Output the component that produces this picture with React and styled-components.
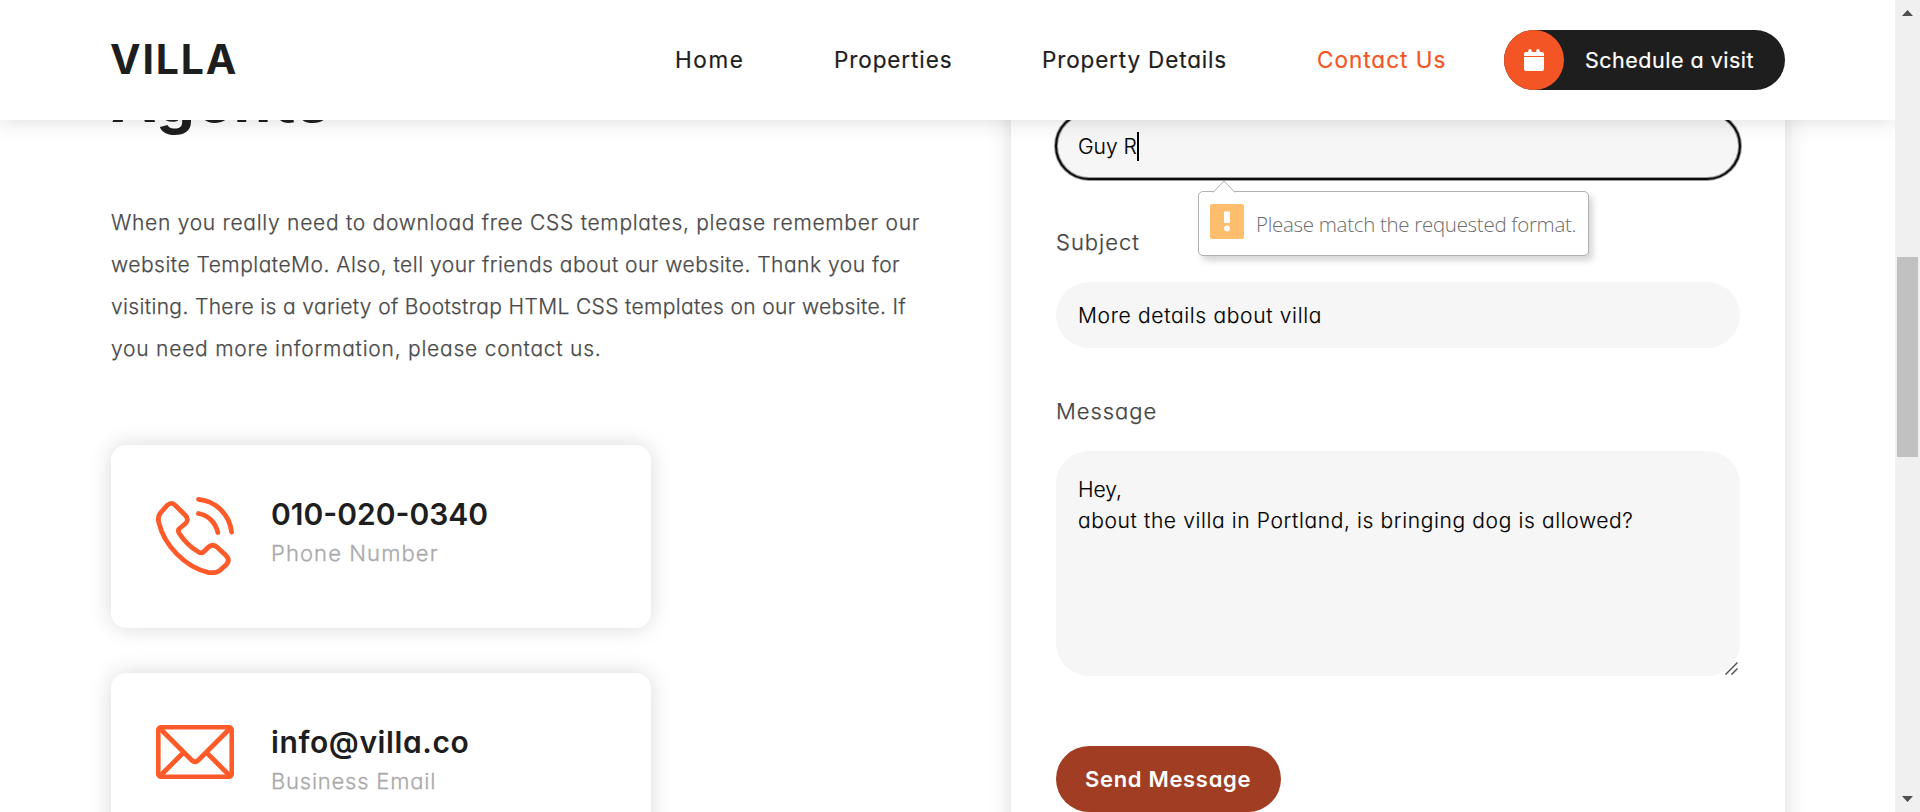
import React from "react";
import styled, { createGlobalStyle } from "styled-components";

const Global = createGlobalStyle`
  *, *::before, *::after { box-sizing: border-box; }
  html, body { margin: 0; padding: 0; overflow: hidden; background: #fff; }
  body { font-family: Inter, "Liberation Sans", sans-serif; font-feature-settings: "cv11"; color: #1e1e1e; }
  h2, h6, p { margin: 0; padding: 0; }
`;
const shadow = "0 0 22px rgba(0, 0, 0, 0.15)";

const Viewport = styled.div`
  display: flex;
  width: 1920px;
  height: 812px;
  overflow: hidden;
`;
const Page = styled.div`
  position: relative;
  width: 1895px;
  height: 812px;
  overflow: hidden;
`;
const Text = styled.span`
  white-space: pre;
  letter-spacing: ${(p) => p.$ls || 0}px;
`;

const Header = styled.header`
  position: absolute;
  inset: 0 0 auto 0;
  z-index: 5;
  height: 120px;
  padding: 0 110px;
  display: flex;
  align-items: center;
  justify-content: space-between;
  background: #fff;
  box-shadow: ${shadow};
`;
const Logo = styled.div`
  font-size: 41px;
  font-weight: 700;
  line-height: 50px;
  padding-bottom: 2px;
`;
const Nav = styled.nav`
  display: flex;
  align-items: center;
  gap: 91px;
`;
const NavLink = styled.a`
  width: ${(p) => p.$w}px;
  font-size: 22.5px;
  font-weight: 400;
  line-height: 30px;
  -webkit-text-stroke: 0.2px currentColor;
  color: ${(p) => (p.$active ? "#f35525" : "#1e1e1e")};
`;
const VisitButton = styled.a`
  display: flex;
  align-items: center;
  gap: 21px;
  width: 281px;
  height: 60px;
  margin-left: -32px;
  border-radius: 30px;
  background: #1e1e1e;
  color: #fff;
  font-size: 21.5px;
  font-weight: 400;
  line-height: 28px;
  -webkit-text-stroke: 0.2px currentColor;
`;
const VisitIcon = styled.span`
  width: 60px;
  height: 60px;
  display: flex;
  align-items: center;
  justify-content: center;
  border-radius: 50%;
  background: #f35525;
`;

const Main = styled.main`
  display: flex;
  justify-content: space-between;
  align-items: flex-start;
  height: 900px;
  padding: 0 110px 0 111px;
`;
const Intro = styled.section`
  width: 820px;
  padding-top: 64px;
`;
const Title = styled.h2`
  font-size: 61px;
  font-weight: 700;
  line-height: 72px;
`;
const Paragraph = styled.p`
  display: flex;
  flex-direction: column;
  margin-top: 66px;
  font-size: 21px;
  font-weight: 300;
  line-height: 42px;
  -webkit-text-stroke: 0.25px currentColor;
  color: #4a4a4a;
`;
const Cards = styled.div`
  display: flex;
  flex-direction: column;
  gap: 45px;
  width: 540px;
  margin-top: 75px;
`;
const InfoCard = styled.article`
  display: flex;
  align-items: flex-start;
  gap: 37px;
  height: 183px;
  padding: 50px 45px;
  border-radius: 15px;
  background: #fff;
  box-shadow: ${shadow};
  svg { margin-top: 2px; flex: none; }
`;
const InfoTitle = styled.h6`
  font-size: 30px;
  font-weight: 600;
  line-height: 38px;
`;
const InfoSub = styled.div`
  margin-top: 3px;
  font-size: 22px;
  font-weight: 300;
  line-height: 34px;
  -webkit-text-stroke: 0.3px currentColor;
  color: #aaa;
`;

const FormCard = styled.form`
  display: flex;
  flex-direction: column;
  align-items: stretch;
  width: 774px;
  height: 900px;
  padding: 113px 45px 0;
  background: #fff;
  box-shadow: ${shadow};
`;
const Field = styled.div`
  display: flex;
  align-items: center;
  height: 66px;
  padding: 0 22px;
  border-radius: 33px;
  background: #f6f6f6;
  color: #000;
  font-size: 21px;
  font-weight: 300;
  -webkit-text-stroke: 0.15px currentColor;
  outline: ${(p) => (p.$focus ? "2px solid #0c0c0c" : "none")};
  outline-offset: -1px;
  box-shadow: ${(p) => (p.$focus ? "0 0 0 2px #999, inset 0 0 0 2px #999" : "none")};
`;
const Caret = styled.i`
  width: 2px;
  height: 29px;
  background: #000;
`;
const Label = styled.label`
  margin: 48px 0 25px;
  font-size: 22px;
  font-weight: 300;
  line-height: 30px;
  -webkit-text-stroke: 0.25px currentColor;
  color: #444;
`;
const MessageBox = styled.div`
  position: relative;
  display: flex;
  flex-direction: column;
  height: 225px;
  padding: 23px 22px;
  border-radius: 33px;
  background: #f6f6f6;
  color: #000;
  font-size: 21px;
  font-weight: 300;
  line-height: 31px;
  -webkit-text-stroke: 0.15px currentColor;
`;
const Grip = styled.svg`
  position: absolute;
  right: 2px;
  bottom: 1px;
`;
const SendButton = styled.div`
  display: flex;
  align-items: center;
  width: 225px;
  height: 66px;
  margin-top: 70px;
  padding-left: 29px;
  border-radius: 33px;
  background: #a13d22;
  color: #fff;
  font-size: 22px;
  font-weight: 600;
`;

const Bubble = styled.div`
  position: absolute;
  left: 1198px;
  top: 191px;
  z-index: 3;
  display: flex;
  align-items: center;
  width: 391px;
  height: 65px;
  padding: 0 0 4px 11px;
  gap: 12px;
  border: 1px solid #b0b0b0;
  border-radius: 5px;
  background: #fff;
  box-shadow: 4px 5px 6px rgba(0, 0, 0, 0.16);
  color: #6c6c6c;
`;
const BubbleText = styled.div`
  padding-top: 4px;
  font-family: "Open Sans", sans-serif;
  font-size: 20.5px;
  font-weight: 300;
`;
const BubbleTip = styled.svg`
  position: absolute;
  left: 13px;
  top: -12px;
`;
const BubbleIcon = styled.svg`
  flex: none;
`;

const Scrollbar = styled.aside`
  display: flex;
  flex-direction: column;
  align-items: center;
  width: 25px;
  height: 812px;
  padding: 10px 0 9px;
  background: #f0f0f0;
`;
const Thumb = styled.div`
  width: 21px;
  height: 200px;
  margin: 240px 0 339px;
  background: #c1c1c1;
`;

const navItems = [
  { label: "Home", width: 68, spacing: 1.6 },
  { label: "Properties", width: 117, spacing: 0.9 },
  { label: "Property Details", width: 184, spacing: 0.85 },
  { label: "Contact Us", width: 128, spacing: 1 },
];

const lines = [
  ["When you really need to download free CSS templates, please remember our", 0.72],
  ["website TemplateMo. Also, tell your friends about our website. Thank you for", 0.5],
  ["visiting. There is a variety of Bootstrap HTML CSS templates on our website. If", 0.36],
  ["you need more information, please contact us.", 0.77],
];

function Calendar() {
  return (
    <svg width="20" height="22" viewBox="0 0 20 22" fill="#fff">
      <path d="M4.300 3V1.800a1.700 1.700 0 0 1 3.400 0V3h4.600V1.800a1.700 1.700 0 0 1 3.400 0V3H18a2 2 0 0 1 2 2v2H0V5a2 2 0 0 1 2-2z" />
      <path d="M0 8h20V20a2 2 0 0 1-2 2H2a2 2 0 0 1-2-2z" />
    </svg>
  );
}
function Phone() {
  return (
    <svg width="78" height="78" viewBox="0 0 78 78" fill="none" stroke="#ff5a2a" strokeWidth="4.8" strokeLinecap="round" strokeLinejoin="round">
      <path d="M11 8.500C14 5.700 17 5.700 19.500 8.500L29.500 18.500C32 21 32 24 29.500 26.500L23.500 31.500Q21.500 33 23 36C28 44 34 50 42.500 55Q45.500 57 48 54.500L52 50.500C55 47.500 58.500 47.500 61.500 50.500L70 58.500C73 61.500 73 64.500 70.500 67.500L64 73.300C61 75.800 57 76.300 52 75.300C29 70 8 48 2.800 25.500C1.800 21 2.300 18 4.800 15.500Z" />
      <path d="M42.500 2.400C60 4 73.500 17.500 75.600 35" />
      <path d="M42.500 16.500C52 18 59.500 25.500 61.800 35.500" />
    </svg>
  );
}
function Envelope() {
  return (
    <svg width="78" height="54" viewBox="0 0 78 54" fill="none" stroke="#ff5a2a" strokeWidth="4.800" strokeLinejoin="round">
      <rect x="2.200" y="2.200" width="73.600" height="49.600" rx="3.500" />
      <path d="M4 3.500L35.500 35Q39 38.500 42.500 35L74 3.500M4 51L27.500 27.500M74 51L50.500 27.500" />
    </svg>
  );
}

function Contact({ icon, title, titleSpacing, sub, subSpacing }) {
  return (
    <InfoCard>
      {icon}
      <div>
        <InfoTitle><Text $ls={titleSpacing}>{title}</Text></InfoTitle>
        <InfoSub><Text $ls={subSpacing}>{sub}</Text></InfoSub>
      </div>
    </InfoCard>
  );
}

export default function App() {
  return (
    <Viewport>
      <Global />
      <Page>
        <Header>
          <Logo><Text $ls={1.8}>VILLA</Text></Logo>
          <Nav>
            {navItems.map((n) => (
              <NavLink key={n.label} $w={n.width} $active={n.label === "Contact Us"}>
                <Text $ls={n.spacing}>{n.label}</Text>
              </NavLink>
            ))}
            <VisitButton>
              <VisitIcon><Calendar /></VisitIcon>
              <Text $ls={0.5}>Schedule a visit</Text>
            </VisitButton>
          </Nav>
        </Header>
        <Main>
          <Intro>
            <Title><Text $ls={1.2}>Agents</Text></Title>
            <Paragraph>
              {lines.map(([t, ls]) => <Text key={t} $ls={ls}>{t}</Text>)}
            </Paragraph>
            <Cards>
              <Contact icon={<Phone />} title="010-020-0340" titleSpacing={0} sub="Phone Number" subSpacing={1.1} />
              <Contact icon={<Envelope />} title="info@villa.co" titleSpacing={0.6} sub="Business Email" subSpacing={0.78} />
            </Cards>
          </Intro>
          <FormCard>
            <Field $focus><Text>Guy R</Text><Caret /></Field>
            <Label><Text $ls={1}>Subject</Text></Label>
            <Field><Text $ls={0.67}>More details about villa</Text></Field>
            <Label><Text $ls={0.95}>Message</Text></Label>
            <MessageBox>
              <Text>Hey,</Text>
              <Text $ls={0.62}>about the villa in Portland, is bringing dog is allowed?</Text>
              <Grip width="13" height="13" viewBox="0 0 13 13" stroke="#555" strokeWidth="1.5">
                <path d="M0.500 12.500L12.500 0.500M6.500 12.500L12.500 6.500" />
              </Grip>
            </MessageBox>
            <SendButton><Text $ls={0.68}>Send Message</Text></SendButton>
          </FormCard>
        </Main>
        <Bubble>
          <BubbleTip width="24" height="13" viewBox="0 0 24 13">
            <path d="M1 12.500L12 1L23 12.500" fill="#fff" stroke="#b0b0b0" />
          </BubbleTip>
          <BubbleIcon width="34" height="35" viewBox="0 0 34 35">
            <rect width="34" height="35" rx="2" fill="#ffbd6e" />
            <path d="M14 7.500h6v11.500h-6z" fill="#fff" />
            <circle cx="17" cy="24.500" r="2.900" fill="#fff" />
          </BubbleIcon>
          <BubbleText><Text $ls={-0.3}>Please match the requested format.</Text></BubbleText>
        </Bubble>
      </Page>
      <Scrollbar>
        <svg width="11" height="7" viewBox="0 0 11 7" fill="#505050"><path d="M0 6L5.500 0L11 6Z" /></svg>
        <Thumb />
        <svg width="11" height="7" viewBox="0 0 11 7" fill="#505050"><path d="M0 0L5.500 6L11 0Z" /></svg>
      </Scrollbar>
    </Viewport>
  );
}
